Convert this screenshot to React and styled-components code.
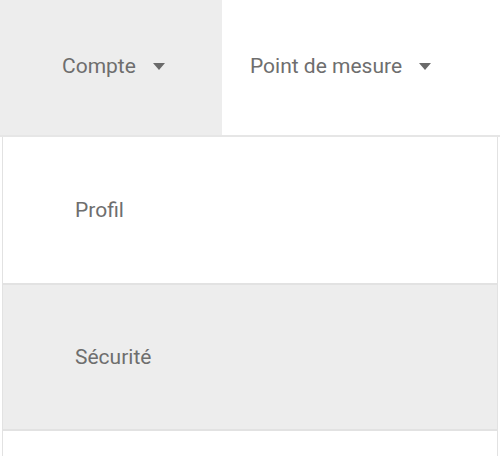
import styled, { createGlobalStyle } from 'styled-components';

const GlobalStyle = createGlobalStyle`
  html, body {
    margin: 0;
    padding: 0;
    background: #ffffff;
  }
  body {
    font-family: Roboto, 'Liberation Sans', sans-serif;
    color: #6e6e6e;
  }
`;

const Page = styled.div`
  width: 500px;
  height: 456px;
  overflow: hidden;
  background: #ffffff;
`;

const NavBar = styled.nav`
  display: flex;
  height: 135px;
  border-bottom: 2px solid #e6e6e6;
`;

const Tab = styled.div`
  display: flex;
  align-items: center;
  gap: 17px;
  width: ${props => props.width || 'auto'};
  flex: ${props => props.grow ? 1 : 'none'};
  padding-left: ${props => props.padLeft}px;
  padding-bottom: 4px;
  background: ${props => props.active ? '#ededed' : '#ffffff'};
  font-size: 21px;
  color: #6e6e6e;
  cursor: pointer;
  box-sizing: border-box;
`;

const Caret = styled.span`
  width: 0;
  height: 0;
  border-left: 6px solid transparent;
  border-right: 6px solid transparent;
  border-top: 7px solid #6a6a6a;
  margin-top: 2px;
`;

const Dropdown = styled.ul`
  list-style: none;
  margin: 0 2px;
  padding: 0;
  border-left: 1px solid #e2e2e2;
  border-right: 1px solid #e2e2e2;
`;

const MenuItem = styled.li`
  display: flex;
  align-items: center;
  height: ${props => props.height}px;
  padding-left: 72px;
  background: ${props => props.shaded ? '#ededed' : '#ffffff'};
  border-bottom: 2px solid #e2e2e2;
  font-size: 21px;
  color: #6e6e6e;
`;

const items = [
  { label: 'Profil', height: 146 },
  { label: 'Sécurité', height: 144, shaded: true },
  { label: '', height: 60 },
];

export default function App() {
  return (
    <Page>
      <GlobalStyle />
      <NavBar>
        <Tab active width="222px" padLeft={62}>
          Compte <Caret />
        </Tab>
        <Tab grow padLeft={28}>
          Point de mesure <Caret />
        </Tab>
      </NavBar>
      <Dropdown>
        {items.map((item, i) => (
          <MenuItem key={i} height={item.height} shaded={item.shaded}>
            {item.label}
          </MenuItem>
        ))}
      </Dropdown>
    </Page>
  );
}
